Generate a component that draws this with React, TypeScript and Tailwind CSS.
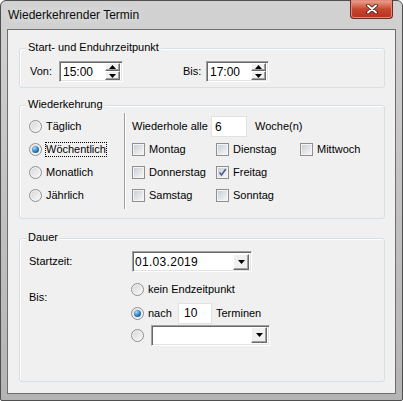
import React from 'react';

const font = { fontFamily: '"Liberation Sans", Arial, sans-serif' };

function GroupBox({ title, className, children }: { title: string; className: string; children: React.ReactNode }) {
  return (
    <div className={`relative ml-[11px] w-[366px] rounded-[3px] border border-[#d5dfe5] shadow-[inset_1px_1px_0_#fff] ${className}`}>
      <span className="absolute -top-[9px] left-[6px] bg-[#f0f0f0] px-[2px] leading-[15px]">{title}</span>
      {children}
    </div>
  );
}

function Radio({ checked, label, focus }: { checked?: boolean; label?: string; focus?: boolean }) {
  return (
    <div className="flex items-center">
      <span className="flex h-[13px] w-[13px] shrink-0 items-center justify-center rounded-full border border-[#8f8f8f] bg-gradient-to-br from-[#d4d4d4] to-[#fbfbfb] shadow-[inset_0_0_0_1px_#f4f4f4]">
        {checked && (
          <span className="h-[7px] w-[7px] rounded-full bg-[radial-gradient(circle_at_35%_30%,#a9dcf6_0%,#2a7bc0_55%,#0c3f74_100%)]" />
        )}
      </span>
      {label && (
        <span className={`ml-[4px] leading-[13px] ${focus ? 'outline outline-1 outline-dotted outline-black' : ''}`}>{label}</span>
      )}
    </div>
  );
}

function Check({ checked, label }: { checked?: boolean; label: string }) {
  return (
    <div className="flex items-center">
      <span className="flex h-[13px] w-[13px] shrink-0 items-center justify-center border border-[#8f8f8f] bg-[#f4f4f4] shadow-[inset_0_0_0_1px_#f4f4f4]">
        <span className="flex h-[9px] w-[9px] items-center justify-center bg-gradient-to-br from-[#cbcfd5] to-[#f6f6f6]">
          {checked && (
            <svg width="9" height="9" viewBox="0 0 9 9">
              <path d="M1.5 4.5 L3.5 7 L7.8 1" stroke="#4a5f97" strokeWidth="1.6" fill="none" />
            </svg>
          )}
        </span>
      </span>
      <span className="ml-[4px] whitespace-nowrap">{label}</span>
    </div>
  );
}

const sunken = 'border border-t-[#a0a0a0] border-l-[#a0a0a0] border-r-white border-b-white shadow-[inset_1px_1px_0_#696969,inset_-1px_-1px_0_#e3e3e3] bg-white';
const raised = 'flex items-center justify-center bg-[#f0f0f0] border border-t-white border-l-white border-r-[#6a6a6a] border-b-[#6a6a6a] shadow-[inset_-1px_-1px_0_#a0a0a0]';

function Tri({ up }: { up?: boolean }) {
  return (
    <svg width="7" height="4" viewBox="0 0 7 4">
      <path d={up ? 'M0 4 L3.5 0 L7 4 Z' : 'M0 0 L7 0 L3.5 4 Z'} fill="#000" />
    </svg>
  );
}

function Spin({ value, w }: { value: string; w: string }) {
  return (
    <div className={`flex h-[21px] ${w} items-center ${sunken} p-[2px]`}>
      <span className="flex-1 pl-px text-[12px]">{value}</span>
      <div className="flex h-[17px] w-[15px] flex-col">
        <div className={`h-[8px] ${raised}`}><Tri up /></div>
        <div className={`h-[9px] ${raised}`}><Tri /></div>
      </div>
    </div>
  );
}

function Combo({ value, w }: { value?: string; w: string }) {
  return (
    <div className={`flex h-[21px] ${w} items-center ${sunken} p-[2px]`}>
      <span className="flex-1 text-[12px] tracking-[0.3px]">{value}</span>
      <div className={`h-[16px] w-[16px] ${raised}`}><Tri /></div>
    </div>
  );
}

export default function App() {
  return (
    <div style={font} className="h-[401px] w-[403px] text-[11px] text-black">
      <div className="flex h-[401px] w-[403px] flex-col rounded-t-[6px] rounded-b-[2px] border border-[#4f4f4f] bg-gradient-to-b from-[#d2d2d2] via-[#c2c2c2] to-[#b4b4b4] px-[6px] pb-[6px]">
        {/* Title bar */}
        <div className="flex h-[28px] items-center justify-between">
          <span className="pl-px text-[12px] text-[#0b0b0b] [text-shadow:0_0_8px_#f2f2f2]">Wiederkehrender Termin</span>
          <div className="-mt-px mr-[3px] flex h-[19px] w-[43px] items-center justify-center self-start rounded-b-[4px] border border-t-0 border-[#6b2a22] bg-gradient-to-b from-[#e8a796] via-[#c9472f] to-[#b4321e] shadow-[inset_0_0_0_1px_#e58a78]">
            <svg width="12" height="10" viewBox="0 0 12 10">
              <path d="M2 1.5 L10 8.5 M10 1.5 L2 8.5" stroke="#3b1a16" strokeWidth="3.6" strokeLinecap="round" />
              <path d="M2 1.5 L10 8.5 M10 1.5 L2 8.5" stroke="#fff" strokeWidth="2" strokeLinecap="round" />
            </svg>
          </div>
        </div>

        {/* Client area */}
        <div className="flex flex-1 flex-col border border-[#6e6e6e] bg-[#f0f0f0]">
          <GroupBox title="Start- und Enduhrzeitpunkt" className="mt-[18px] h-[40px]">
            <div className="flex items-center pl-[10px] pt-[12px]">
              <span className="w-[29px]">Von:</span>
              <Spin value="15:00" w="w-[64px]" />
              <span className="ml-[60px] w-[23px]">Bis:</span>
              <Spin value="17:00" w="w-[63px]" />
            </div>
          </GroupBox>

          <GroupBox title="Wiederkehrung" className="mt-[17px] h-[114px]">
            <div className="flex">
              <div className="flex w-[104px] flex-col pl-[9px] pt-[9px]">
                <div className="flex h-[23px] items-center"><Radio label="Täglich" /></div>
                <div className="flex h-[23px] items-center"><Radio checked focus label="Wöchentlich" /></div>
                <div className="flex h-[23px] items-center"><Radio label="Monatlich" /></div>
                <div className="flex h-[23px] items-center"><Radio label="Jährlich" /></div>
              </div>
              <div className="mt-[7px] h-[96px] w-[2px] border-l border-r border-l-[#a0a0a0] border-r-white" />
              <div className="flex flex-col pl-[6px] pt-[9px]">
                <div className="flex h-[23px] items-center">
                  <span className="w-[79px] whitespace-nowrap">Wiederhole alle</span>
                  <div className="flex h-[21px] w-[36px] items-center border border-[#e2e2e2] bg-white pl-[3px] text-[12px]">6</div>
                  <span className="ml-[8px]">Woche(n)</span>
                </div>
                <div className="grid grid-cols-[84px_84px_84px]">
                  <div className="flex h-[23px] items-center"><Check label="Montag" /></div>
                  <div className="flex h-[23px] items-center"><Check label="Dienstag" /></div>
                  <div className="flex h-[23px] items-center"><Check label="Mittwoch" /></div>
                  <div className="flex h-[23px] items-center overflow-hidden"><Check label="Donnerstag" /></div>
                  <div className="flex h-[23px] items-center"><Check checked label="Freitag" /></div>
                  <div />
                  <div className="flex h-[23px] items-center"><Check label="Samstag" /></div>
                  <div className="flex h-[23px] items-center"><Check label="Sonntag" /></div>
                </div>
              </div>
            </div>
          </GroupBox>

          <GroupBox title="Dauer" className="mt-[19px] h-[144px]">
            <div className="flex flex-col pl-[9px] pt-[12px]">
              <div className="flex items-center">
                <span className="w-[103px]">Startzeit:</span>
                <Combo value="01.03.2019" w="w-[120px]" />
              </div>
              <div className="mt-[7px] flex">
                <span className="w-[102px] pt-[10px]">Bis:</span>
                <div className="flex flex-col">
                  <div className="flex h-[20px] items-center"><Radio label="kein Endzeitpunkt" /></div>
                  <div className="mt-[4px] flex h-[20px] items-center">
                    <Radio checked />
                    <span className="ml-[4px] w-[30px]">nach</span>
                    <div className="flex h-[21px] w-[34px] items-center border border-[#e2e2e2] bg-white pl-[5px] text-[12px]">10</div>
                    <span className="ml-[4px]">Terminen</span>
                  </div>
                  <div className="mt-[2px] flex h-[20px] items-center">
                    <Radio />
                    <div className="ml-[7px]"><Combo w="w-[119px]" /></div>
                  </div>
                </div>
              </div>
            </div>
          </GroupBox>
        </div>
      </div>
    </div>
  );
}
